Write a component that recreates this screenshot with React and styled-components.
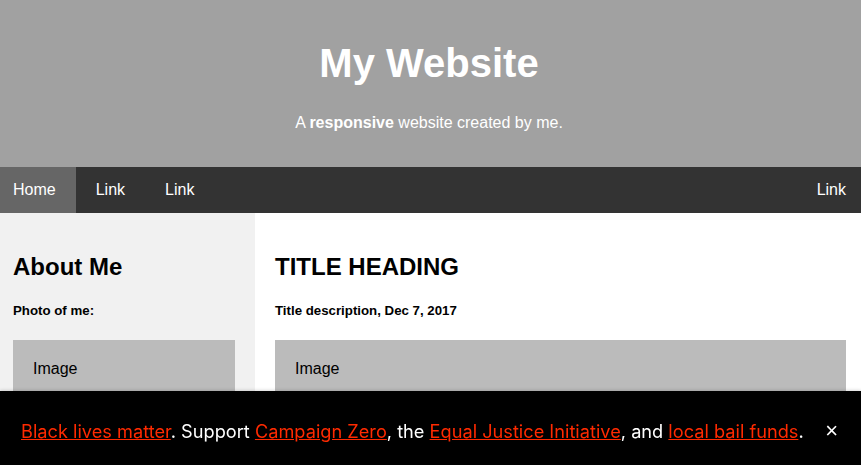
import React, { useState } from "react";
import styled, { createGlobalStyle } from "styled-components";

const GlobalStyle = createGlobalStyle`
  body {
    margin: 0;
    font-family: "Liberation Sans", Arial, sans-serif;
    overflow: hidden;
  }
`;

function App() {
  const [bannerOpen, setBannerOpen] = useState(true);

  return (
    <>
      <GlobalStyle />
      <Header>
        <Title>My Website</Title>
        <Subtitle>
          A <b>responsive</b> website created by me.
        </Subtitle>
      </Header>

      <Navbar>
        <NavLink href="#" active first>
          Home
        </NavLink>
        <NavLink href="#">Link</NavLink>
        <NavLink href="#">Link</NavLink>
        <NavLink href="#" right>
          Link
        </NavLink>
      </Navbar>

      <Row>
        <Side>
          <Heading>About Me</Heading>
          <SubHeading>Photo of me:</SubHeading>
          <FakeImg height="200px">Image</FakeImg>
        </Side>
        <Main>
          <Heading>TITLE HEADING</Heading>
          <SubHeading>Title description, Dec 7, 2017</SubHeading>
          <FakeImg height="200px">Image</FakeImg>
        </Main>
      </Row>

      {bannerOpen && (
        <Banner>
          <BannerText>
            <BannerLink href="#">Black lives matter</BannerLink>. Support{" "}
            <BannerLink href="#">Campaign Zero</BannerLink>, the{" "}
            <BannerLink href="#">Equal Justice Initiative</BannerLink>, and{" "}
            <BannerLink href="#">local bail funds</BannerLink>.
          </BannerText>
          <CloseButton onClick={() => setBannerOpen(false)}>×</CloseButton>
        </Banner>
      )}
    </>
  );
}

const Header = styled.div`
  background-color: #a1a1a1;
  color: white;
  text-align: center;
  padding: 14px 4px 19px 1px;
`;

const Title = styled.h1`
  font-size: 40px;
  margin: 27px 0 28px;
`;

const Subtitle = styled.p`
  font-size: 16px;
  margin: 16px 0;
`;

const Navbar = styled.div`
  display: flex;
  background-color: #333;
`;

const NavLink = styled.a`
  display: block;
  color: white;
  text-decoration: none;
  font-size: 16px;
  line-height: 18px;
  padding: ${(props) => (props.first ? "14px 20px 14px 13px" : "14px 20px")};
  padding-right: ${(props) => (props.right ? "15px" : undefined)};
  margin-left: ${(props) => (props.right ? "auto" : "0")};
  background-color: ${(props) => (props.active ? "#666" : "transparent")};
`;

const Row = styled.div`
  display: flex;
`;

const Side = styled.div`
  box-sizing: border-box;
  width: 255px;
  flex-shrink: 0;
  background-color: #f1f1f1;
  padding: 20px 20px 20px 13px;
`;

const Main = styled.div`
  flex: 1;
  background-color: white;
  padding: 20px 15px 20px 20px;
`;

const Heading = styled.h2`
  font-size: 24px;
  margin: 20px 0;
`;

const SubHeading = styled.h5`
  font-size: 13.28px;
  margin: 22px 0;
`;

const FakeImg = styled.div`
  background-color: #bbb;
  width: 100%;
  box-sizing: border-box;
  padding: 20px;
  height: ${(props) => props.height || "60px"};
`;

const Banner = styled.div`
  position: fixed;
  left: 0;
  right: 0;
  bottom: 0;
  box-sizing: border-box;
  height: 74px;
  background-color: #000;
  box-shadow: 0 -1px 3px rgba(0, 0, 0, 0.15);
  display: flex;
  align-items: center;
  padding: 6px 21px 0;
  font-family: Inter, "Liberation Sans", sans-serif;
  font-size: 18.2px;
  color: white;
`;

const BannerText = styled.div`
  flex: 1;
`;

const BannerLink = styled.a`
  color: #ff2a00;
  text-decoration: underline;
`;

const CloseButton = styled.button`
  background: none;
  border: 0;
  color: white;
  font-size: 22px;
  font-family: "Liberation Sans", sans-serif;
  padding: 0;
  margin-right: 2px;
  &:hover {
    cursor: pointer;
  }
`;

export default App;
